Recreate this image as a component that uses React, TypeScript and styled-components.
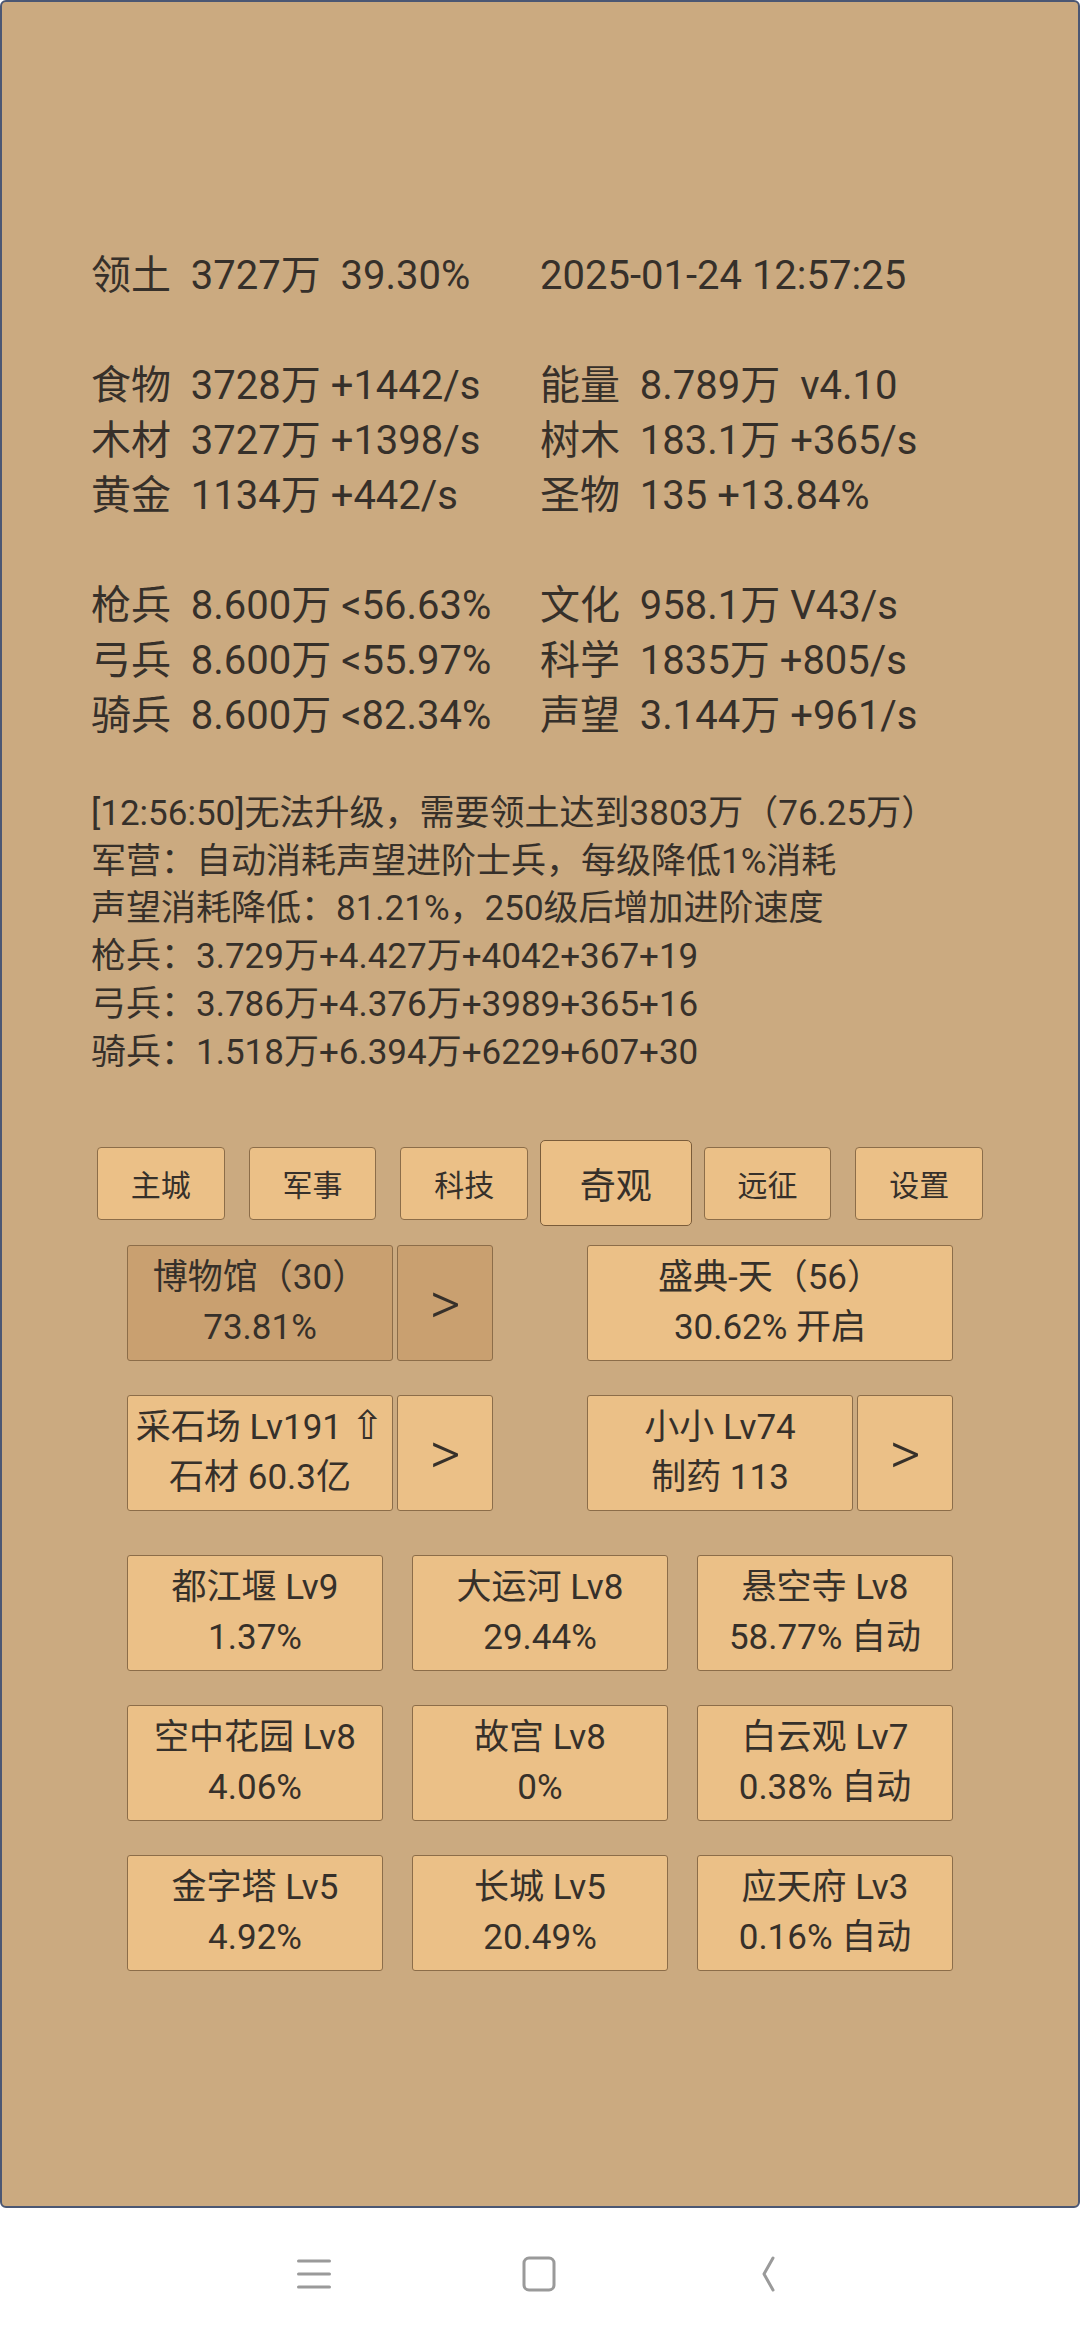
import styled, { createGlobalStyle } from "styled-components";

const stats: [string, string][] = [
  ["领土  3727万  39.30%", "2025-01-24 12:57:25"],
  ["", ""],
  ["食物  3728万 +1442/s", "能量  8.789万  v4.10"],
  ["木材  3727万 +1398/s", "树木  183.1万 +365/s"],
  ["黄金  1134万 +442/s", "圣物  135 +13.84%"],
  ["", ""],
  ["枪兵  8.600万 <56.63%", "文化  958.1万 V43/s"],
  ["弓兵  8.600万 <55.97%", "科学  1835万 +805/s"],
  ["骑兵  8.600万 <82.34%", "声望  3.144万 +961/s"],
];

const logLines = [
  "[12:56:50]无法升级，需要领土达到3803万（76.25万）",
  "军营：自动消耗声望进阶士兵，每级降低1%消耗",
  "声望消耗降低：81.21%，250级后增加进阶速度",
  "枪兵：3.729万+4.427万+4042+367+19",
  "弓兵：3.786万+4.376万+3989+365+16",
  "骑兵：1.518万+6.394万+6229+607+30",
];

const tabs = ["主城", "军事", "科技", "奇观", "远征", "设置"];

const wonders = [
  ["都江堰 Lv9", "1.37%"],
  ["大运河 Lv8", "29.44%"],
  ["悬空寺 Lv8", "58.77% 自动"],
  ["空中花园 Lv8", "4.06%"],
  ["故宫 Lv8", "0%"],
  ["白云观 Lv7", "0.38% 自动"],
  ["金字塔 Lv5", "4.92%"],
  ["长城 Lv5", "20.49%"],
  ["应天府 Lv3", "0.16% 自动"],
];

function App() {
  return (
    <Screen>
      <GlobalStyle />
      <Panel>
        <StatsGrid>
          {stats.map(([left, right], i) => (
            <StatRow key={i}>
              <span>{left}</span>
              <span>{right}</span>
            </StatRow>
          ))}
        </StatsGrid>

        <Log>
          {logLines.map((line) => (
            <div key={line}>{line}</div>
          ))}
        </Log>

        <TabBar>
          {tabs.map((t) => (
            <Tab key={t} $active={t === "奇观"}>
              {t}
            </Tab>
          ))}
        </TabBar>

        <CardArea>
          <PairRow>
            <Group>
              <Card $pressed>
                <span>博物馆（30）</span>
                <span>73.81%</span>
              </Card>
              <Arrow $pressed>&gt;</Arrow>
            </Group>
            <Group>
              <Card>
                <span>盛典-天（56）</span>
                <span>30.62% 开启</span>
              </Card>
            </Group>
          </PairRow>
          <PairRow>
            <Group>
              <Card>
                <span>
                  采石场 Lv191 <UpMark>⇧</UpMark>
                </span>
                <span>石材 60.3亿</span>
              </Card>
              <Arrow>&gt;</Arrow>
            </Group>
            <Group>
              <Card>
                <span>小小 Lv74</span>
                <span>制药 113</span>
              </Card>
              <Arrow>&gt;</Arrow>
            </Group>
          </PairRow>

          <WonderGrid>
            {wonders.map(([name, info]) => (
              <Card key={name}>
                <span>{name}</span>
                <span>{info}</span>
              </Card>
            ))}
          </WonderGrid>
        </CardArea>
      </Panel>

      <NavBar>
        <NavIcon viewBox="0 0 40 40">
          <path d="M4.5 7h31M4.5 20h31M4.5 33h31" />
        </NavIcon>
        <NavIcon viewBox="0 0 40 40">
          <rect x="4" y="4" width="30" height="32" rx="5" />
        </NavIcon>
        <NavIcon viewBox="0 0 40 40">
          <path d="M27 4 L18 20 L27 36" />
        </NavIcon>
      </NavBar>
    </Screen>
  );
}

const GlobalStyle = createGlobalStyle`
  html, body {
    margin: 0;
    padding: 0;
    background: #fff;
  }
  body {
    font-family: Roboto, "Noto Sans CJK SC", sans-serif;
    color: #36302a;
  }
`;

const Screen = styled.div`
  width: 1080px;
  height: 2340px;
  display: flex;
  flex-direction: column;
`;

const Panel = styled.div`
  height: 2208px;
  box-sizing: border-box;
  border: 2px solid #4b5773;
  border-radius: 6px;
  background: #cbaa80;
  padding-top: 246px;
`;

const StatsGrid = styled.div`
  padding-left: 89px;
  font-size: 40px;
  line-height: 55px;
  white-space: pre;
`;

const StatRow = styled.div`
  display: grid;
  grid-template-columns: 449px auto;
  height: 55px;
`;

const Log = styled.div`
  margin-top: 47px;
  padding-left: 89px;
  font-size: 35px;
  line-height: 47.7px;
  white-space: nowrap;
`;

const TabBar = styled.div`
  width: 910px;
  height: 86px;
  margin: 64px auto 0;
  display: grid;
  grid-template-columns: repeat(6, 1fr);
  align-items: center;
`;

const Tab = styled.div<{ $active?: boolean }>`
  height: ${(p) => (p.$active ? 86 : 73)}px;
  margin: 0 ${(p) => (p.$active ? 0 : 12)}px;
  box-sizing: border-box;
  display: flex;
  align-items: center;
  justify-content: center;
  background: #ebc087;
  border: 1.5px solid ${(p) => (p.$active ? "#7a5c3a" : "#8c6d49")};
  border-radius: ${(p) => (p.$active ? 5 : 4)}px;
  font-size: ${(p) => (p.$active ? 36 : 30)}px;
`;

const CardArea = styled.div`
  width: 826px;
  margin: 19px auto 0;
  display: flex;
  flex-direction: column;
  gap: 34px;
`;

const PairRow = styled.div`
  display: flex;
  justify-content: space-between;
`;

const Group = styled.div`
  width: 366px;
  height: 116px;
  display: flex;
  gap: 4px;
`;

const Card = styled.div<{ $pressed?: boolean }>`
  flex: 1;
  height: 116px;
  box-sizing: border-box;
  display: flex;
  flex-direction: column;
  align-items: center;
  justify-content: center;
  background: ${(p) => (p.$pressed ? "#c9a070" : "#ebc087")};
  border: 1.5px solid #8c6d49;
  border-radius: 3px;
  font-size: 35px;
  line-height: 50px;
  white-space: nowrap;
`;

const Arrow = styled.div<{ $pressed?: boolean }>`
  width: 96px;
  box-sizing: border-box;
  display: flex;
  align-items: center;
  justify-content: center;
  background: ${(p) => (p.$pressed ? "#c9a070" : "#ebc087")};
  border: 1.5px solid #8c6d49;
  border-radius: 3px;
  font-size: 60px;
  font-weight: 300;
`;

const UpMark = styled.span`
  font-family: "DejaVu Sans", sans-serif;
  font-size: 40px;
  line-height: 1;
`;

const WonderGrid = styled.div`
  margin-top: 10px;
  display: grid;
  grid-template-columns: repeat(3, 256px);
  justify-content: space-between;
  row-gap: 34px;
`;

const NavBar = styled.div`
  flex: 1;
  display: flex;
  align-items: center;
  justify-content: center;
  gap: 186px;
`;

const NavIcon = styled.svg`
  width: 40px;
  height: 40px;
  fill: none;
  stroke: #9a9a9a;
  stroke-width: 3;
  stroke-linecap: round;
  stroke-linejoin: round;
`;

export default App;
